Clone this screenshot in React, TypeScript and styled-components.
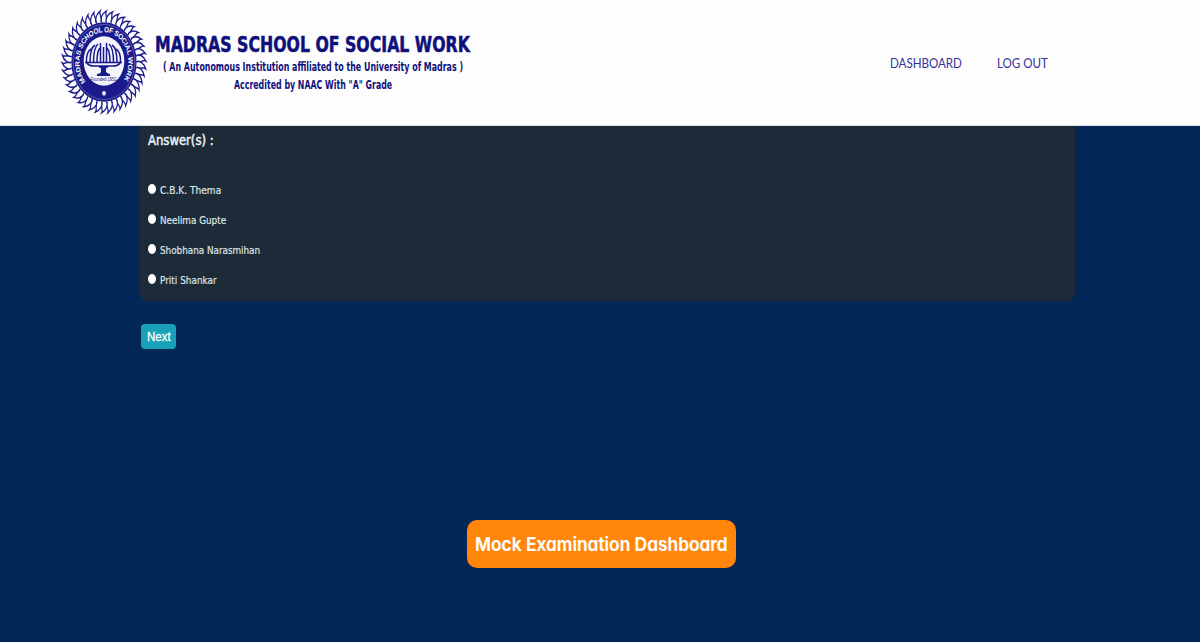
import React, { useLayoutEffect, useRef } from "react";
import styled, { createGlobalStyle } from "styled-components";

const Global = createGlobalStyle`
  * { box-sizing: border-box; }
  body { margin: 0; background: #032857; font-family: "DejaVu Sans Condensed", "DejaVu Sans", sans-serif; }
`;

const Page = styled.div`
  height: 642px;
  background: #032857;
  overflow: hidden;
`;

const Header = styled.header`
  height: 126px;
  display: flex;
  background: #fdfdfd;
  border-bottom: 1px solid #d9dfe6;
`;

const Brand = styled.div`
  display: flex;
  padding: 9px 0 0 59px;
`;

const Titles = styled.div`
  width: 315px;
  margin-left: 6px;
  padding-top: 23px;
  display: flex;
  flex-direction: column;
  align-items: center;
  color: #10107a;
`;

const Slot = styled.span<{ $w: number; $size: number; $line: number; $weight?: number; $font?: string; $stroke?: number }>`
  display: block;
  width: ${(p) => p.$w}px;
  height: ${(p) => p.$line}px;
  line-height: ${(p) => p.$line}px;
  font-size: ${(p) => p.$size}px;
  font-weight: ${(p) => p.$weight ?? 400};
  ${(p) => (p.$font ? `font-family: ${p.$font};` : "")}
  -webkit-text-stroke: ${(p) => p.$stroke ?? 0}px currentColor;
  white-space: nowrap;
`;

const Stretch = styled.span`
  display: inline-block;
  transform-origin: 0 50%;
`;

type FitProps = {
  w: number;
  size: number;
  line: number;
  weight?: number;
  font?: string;
  stroke?: number;
  children: string;
};

/* Condenses one line of text horizontally so that it fills its width. */
function Fit({ w, size, line, weight, font, stroke, children }: FitProps) {
  const ref = useRef<HTMLSpanElement>(null);
  useLayoutEffect(() => {
    const el = ref.current;
    if (el) el.style.transform = `scaleX(${w / el.offsetWidth})`;
  }, [w, children]);
  return (
    <Slot $w={w} $size={size} $line={line} $weight={weight} $font={font} $stroke={stroke}>
      <Stretch ref={ref}>{children}</Stretch>
    </Slot>
  );
}

const Nav = styled.nav`
  margin-left: auto;
  margin-right: 152.5px;
  display: flex;
  gap: 34.5px;
  padding-top: 53px;
`;

const NavLink = styled.a`
  color: #32329a;
  text-decoration: none;
`;

const Main = styled.main`
  padding: 0 125px 0 140px;
`;

const Panel = styled.section`
  height: 175px;
  padding: 4px 8px 0;
  border-radius: 0 0 8px 8px;
  background: #1d2b39;
  color: #f0f2f4;
`;

const Options = styled.div`
  margin-top: 26px;
  display: flex;
  flex-direction: column;
`;

const Option = styled.label`
  height: 30px;
  display: flex;
  align-items: center;
  gap: 4px;
  color: #dfe3e6;
`;

const Radio = styled.input`
  appearance: none;
  width: 8px;
  height: 10px;
  margin: 0 0 5px;
  border-radius: 50%;
  background: #fff;
`;

const NextButton = styled.button`
  display: block;
  margin: 23px 0 0 1px;
  width: 35px;
  height: 25px;
  padding: 0 0 0 6px;
  border: 0;
  border-radius: 4px;
  background: #17a2b8;
  color: #fff;
`;

const Footer = styled.div`
  display: flex;
  justify-content: center;
  margin-top: 171px;
  padding-left: 3px;
`;

const DashboardButton = styled.button`
  width: 269px;
  height: 48px;
  padding: 1px 8px 0;
  border: 0;
  border-radius: 10px;
  background: #ff8609;
  color: #fff;
  text-align: left;
  font-feature-settings: "cv11";
`;

const LogoSvg = styled.svg`
  display: block;
  width: 90px;
  height: 106px;
`;

const INK = "#1a1a8c";
const TEETH = 42;

function Logo() {
  const teeth = Array.from({ length: TEETH }, (_, i) => (
    <path
      key={i}
      d="M-3 -39 C-5 -43 -2.5 -48 2.8 -50.4 C0.8 -47.5 4.6 -44 2.2 -40"
      transform={`rotate(${(i * 360) / TEETH})`}
    />
  ));
  return (
    <LogoSvg viewBox="0 0 90 106" aria-label="Madras School of Social Work emblem">
      <g transform="translate(45 53) scale(0.83 1.01)">
        <g fill="#fdfdfd" stroke={INK} strokeWidth="1.5">{teeth}</g>
        <circle r="39.3" fill={INK} />
        <circle r="37.2" fill="none" stroke="#8c8cc8" strokeWidth="0.6" />
        <circle cy="-1" r="24.5" fill="#f4f4fb" />
        <path id="ring" d="M-22.2 19.4 A29.5 29.5 0 1 1 22.2 19.4" fill="none" />
        <text fill="#fff" fontFamily="Liberation Sans, sans-serif" fontWeight="700" fontSize="7.6">
          <textPath href="#ring" textLength="132">MADRAS SCHOOL OF SOCIAL WORK</textPath>
        </text>
        <ellipse cy="31" rx="2.2" ry="2.3" fill="#fff" />
      </g>
      <g fill="none" stroke={INK} strokeWidth="1.5">
        <path d="M27.5 53 Q27 43 32 40 M31 53 Q31 39 36 36 M34.5 53 Q34.5 39 39 35 M38 53 Q38 42 41 39 M41.5 53 V34 M44.5 53 V38 M47.5 53 V34 M51 53 Q51 42 48 39 M54.5 53 Q54.5 39 50 35 M58 53 Q58 39 53 36 M61.5 53 Q62 43 57 40" />
        <path d="M26 53.5 H63 M28 54 Q30 57 35 57 H54 Q59 57 61 54" strokeWidth="1.7" />
      </g>
      <path d="M38 57 H51 L47 59.5 V63 Q49 65 51 65 V67 H38 V65 Q41 65 42 63 V59.5 Z" fill={INK} />
      <text x="31.5" y="72" fontSize="5.2" fill={INK} fontFamily="Liberation Sans, sans-serif" textLength="26" lengthAdjust="spacingAndGlyphs">Founded 1952</text>
    </LogoSvg>
  );
}

const ANSWERS: [string, number][] = [
  ["C.B.K. Thema", 61.5],
  ["Neelima Gupte", 66],
  ["Shobhana Narasmihan", 100.5],
  ["Priti Shankar", 57],
];

const NAV_FONT = '"Lato", sans-serif';

export default function App() {
  return (
    <Page>
      <Global />
      <Header>
        <Brand>
          <Logo />
          <Titles>
            <Fit w={315} size={20.5} line={27} weight={700} stroke={0.5}>MADRAS SCHOOL OF SOCIAL WORK</Fit>
            <Fit w={300} size={11.4} line={16} weight={700}>( An Autonomous Institution affiliated to the University of Madras )</Fit>
            <Fit w={158} size={11.4} line={20} weight={700}>Accredited by NAAC With "A" Grade</Fit>
          </Titles>
        </Brand>
        <Nav>
          <NavLink><Fit w={72} size={14.3} line={20} font={NAV_FONT}>DASHBOARD</Fit></NavLink>
          <NavLink><Fit w={51} size={14.3} line={20} font={NAV_FONT}>LOG OUT</Fit></NavLink>
        </Nav>
      </Header>
      <Main>
        <Panel>
          <Fit w={66} size={14.5} line={20} stroke={0.5}>Answer(s) :</Fit>
          <Options>
            {ANSWERS.map(([name, w]) => (
              <Option key={name}>
                <Radio type="radio" name="answer" />
                <Fit w={w} size={11.3} line={18} stroke={0.2}>{name}</Fit>
              </Option>
            ))}
          </Options>
        </Panel>
        <NextButton>
          <Fit w={24} size={12.5} line={20} stroke={0.3} font={'"Liberation Sans", sans-serif'}>Next</Fit>
        </NextButton>
      </Main>
      <Footer>
        <DashboardButton>
          <Fit w={253} size={19} line={26} weight={600} stroke={0.2} font={'"Inter", sans-serif'}>Mock Examination Dashboard</Fit>
        </DashboardButton>
      </Footer>
    </Page>
  );
}
